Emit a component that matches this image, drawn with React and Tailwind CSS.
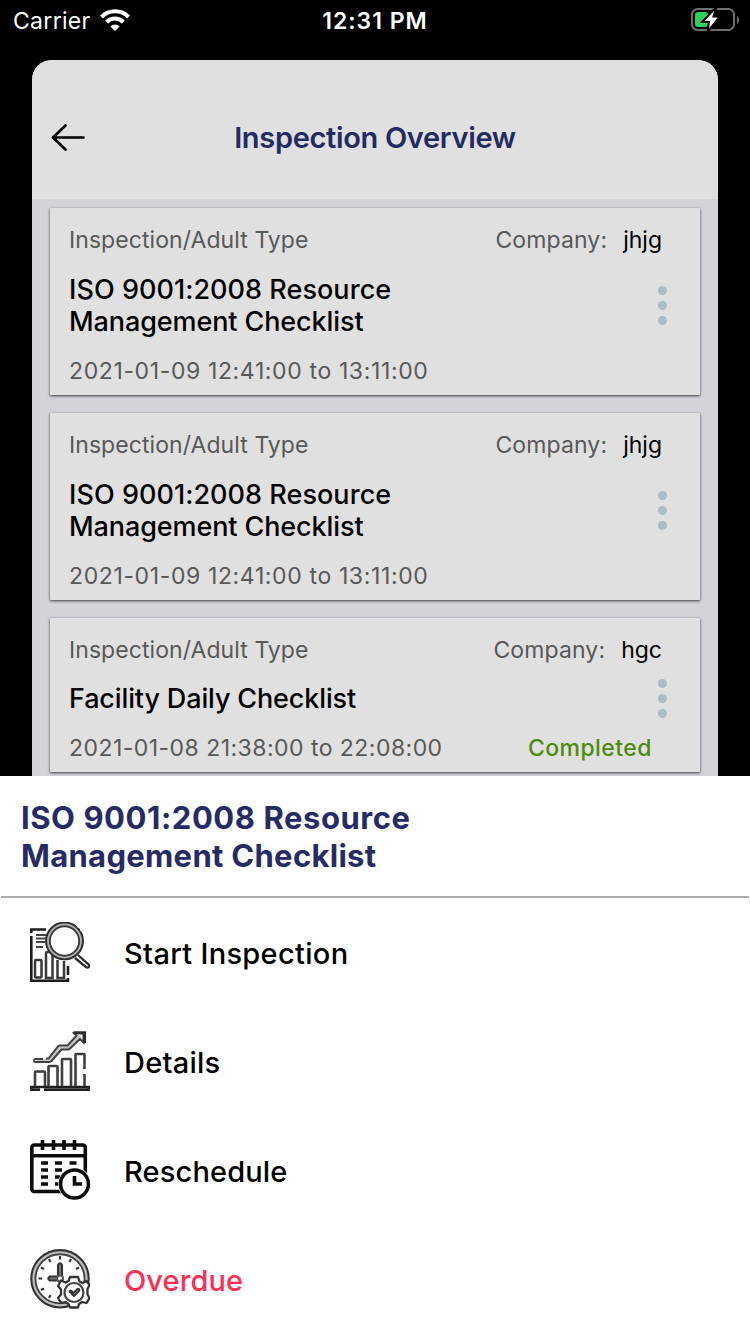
const cards = [
  {
    title: [
      { text: "ISO 9001:2008 Resource", spacing: "tracking-[0.05px]" },
      { text: "Management Checklist", spacing: "tracking-[-0.1px]" },
    ],
    company: "jhjg",
    time: "2021-01-09 12:41:00 to 13:11:00",
    timeSpacing: "tracking-[0.62px]",
  },
  {
    title: [
      { text: "ISO 9001:2008 Resource", spacing: "tracking-[0.05px]" },
      { text: "Management Checklist", spacing: "tracking-[-0.1px]" },
    ],
    company: "jhjg",
    time: "2021-01-09 12:41:00 to 13:11:00",
    timeSpacing: "tracking-[0.62px]",
  },
  {
    title: [{ text: "Facility Daily Checklist", spacing: "tracking-[-0.14px]" }],
    company: "hgc",
    time: "2021-01-08 21:38:00 to 22:08:00",
    timeSpacing: "tracking-[0.46px]",
    status: "Completed",
  },
];

function WifiIcon() {
  return (
    <svg className="ml-[9px] h-[22px] w-[30px]" viewBox="0 0 30 22" fill="none" stroke="#fff" strokeWidth="4.200">
      <path d="M1.500 7.900a19 19 0 0 1 27 0" />
      <path d="M6.600 13a11.800 11.800 0 0 1 16.800 0" />
      <path d="M15 22l-4.600-4.600a6.600 6.600 0 0 1 9.200 0z" fill="#fff" stroke="none" />
    </svg>
  );
}

function BatteryIcon() {
  return (
    <svg className="h-6 w-[50px]" viewBox="690 8 50 24">
      <rect x="692" y="9" width="42" height="21" rx="5.500" fill="none" stroke="#6f6f71" strokeWidth="2" />
      <path d="M737 16v8c2.600-1.600 2.600-6.400 0-8z" fill="#6f6f71" />
      <rect x="695" y="12" width="13" height="15" rx="3" fill="#30d158" />
      <path d="M716.500 7l-14.500 15h7L707.500 32l12.500-15.500h-6.500z" fill="#fff" stroke="#000" strokeWidth="2" />
    </svg>
  );
}

function BackArrow() {
  return (
    <svg className="h-7 w-9" viewBox="0 0 36 28" fill="none" stroke="#000" strokeWidth="2.700" strokeLinecap="round" strokeLinejoin="round">
      <path d="M33.500 13.500H3M15.500 1.500L3 13.500L15.500 25.500" />
    </svg>
  );
}

function Dots({ className }) {
  return (
    <div className={"flex w-[9px] flex-col gap-1.5 " + className}>
      <span className="size-[9px] rounded-full bg-[#adbbc4]" />
      <span className="size-[9px] rounded-full bg-[#adbbc4]" />
      <span className="size-[9px] rounded-full bg-[#adbbc4]" />
    </div>
  );
}

function Card({ card }) {
  const tall = card.title.length > 1;
  return (
    <article
      className={
        "flex flex-col rounded-[1px] bg-[#e0e0e0] pl-[19px] pr-[33px] pt-[16px] shadow-[0_1px_3px_rgba(0,0,0,0.75)] " +
        (tall ? "h-[187px]" : "h-[154px]")
      }
    >
      <div className="flex h-8 items-center justify-between pr-[5px] text-[23px] leading-8">
        <span className="tracking-[0.07px] text-[#585858]">Inspection/Adult Type</span>
        <span className="flex gap-4">
          <span className="tracking-[0.12px] text-[#585858]">Company:</span>
          <span className="text-black">{card.company}</span>
        </span>
      </div>
      <div className={"flex items-center justify-between " + (tall ? "mt-[18px] h-16" : "mt-[17px] h-8")}>
        <h2 className="text-[27px] font-medium leading-8 text-black">
          {card.title.map((line) => (
            <span key={line.text} className={"block " + line.spacing}>{line.text}</span>
          ))}
        </h2>
        <Dots className={tall ? "-mt-[2px]" : "-mt-px"} />
      </div>
      <div className="mt-[17px] flex h-8 items-center justify-between pr-[15px] text-[23px] leading-8">
        <span className={"text-[#585858] " + card.timeSpacing}>{card.time}</span>
        {card.status && <span className="font-medium tracking-[0.45px] text-[#4f8a10]">{card.status}</span>}
      </div>
    </article>
  );
}

function StartIcon() {
  return (
    <svg className="size-[60px]" viewBox="0 0 60 60" fill="none" stroke="#3a3a3a" strokeWidth="2.500">
      <path d="M16 7.500H1.300V11M1.300 14V58.700H38V56M38 53V44" stroke="#1c1c1c" strokeWidth="2.600" />
      <path d="M6 13h11M6 16.500h10M6 20h10M6 25h7" stroke="#444" strokeWidth="2" />
      <rect x="5" y="38" width="6.500" height="17.500" rx="1" />
      <path d="M16 56V31q0-1 1-1h4.500q1 0 1 1V56zM27.500 38v18h6.500V39" />
      <path d="M48 33l10.500 9.500q1.500 2-.5 3-1 .5-2-.5L45 36" stroke="#2c2c2c" strokeWidth="2.300" />
      <circle cx="34.500" cy="19" r="16.700" stroke="#b5b5b5" strokeWidth="5" />
      <circle cx="34.500" cy="19" r="18.400" stroke="#2b2b2b" strokeWidth="1.900" />
      <circle cx="34.500" cy="19" r="14.700" stroke="#3c3c3c" strokeWidth="1.900" />
      <path d="M47.500 5.500l2-2M50.500 9l2.500-1.500" stroke="#fff" strokeWidth="1.500" />
    </svg>
  );
}

function DetailsIcon() {
  return (
    <svg className="size-[60px]" viewBox="0 0 60 60" fill="none" stroke="#404040" strokeWidth="2.600">
      <path d="M14 58.700H58.700V56H1.300V58.700H10" stroke="#1f1f1f" strokeWidth="2.400" />
      <path d="M5 55V41.500q0-1 1-1h8q1 0 1 1v13.500M18.500 55V36q0-1 1-1h7q1 0 1 1v19M32 55V29q0-1 1-1h7q1 0 1 1v26M45.500 55V24q0-1 1-1h7q1 0 1 1v14M54.500 43v12" />
      <path d="M7 29.500H19.500L30 17H38L50 5" stroke="#c4c4c4" strokeWidth="3.500" />
      <path d="M13 28H5.500q-1.500 0-1.500 1.500T5.500 31H19q1 0 2.500-1L31.500 18.500H38q1 0 2-1L50 8l3.500 3.500V2.200H44l2.500 2.500L37.500 14.500H30q-1 0-2 1L18.500 27.500H16" strokeWidth="2" />
      <path d="M43.500 1.800H54.500V12" stroke="#2d2d2d" strokeWidth="3" />
    </svg>
  );
}

function RescheduleIcon() {
  return (
    <svg className="size-[60px]" viewBox="0 0 60 60" fill="none" stroke="#0b0b0b" strokeWidth="3.600">
      <rect x="1.800" y="5" width="53.500" height="46.500" rx="2.500" />
      <path d="M2 15.800H55M12.500 0v10M23.500 0v10M34 0v10M44.500 0v10" />
      <path d="M11 23h7M25 23h7M39.500 23h7M11 30h7M25 30h7M11 37h7M25 37h7M11 44h7M25 44h7" strokeWidth="3.600" />
      <circle cx="44.500" cy="44" r="16.500" fill="#fff" stroke="none" />
      <circle cx="44.500" cy="44" r="14" fill="#fff" />
      <path d="M44.500 36v8h7.500" />
    </svg>
  );
}

function OverdueIcon() {
  return (
    <svg className="size-[60px]" viewBox="0 0 60 60" fill="none" stroke="#333" strokeWidth="2.100">
      <circle cx="30" cy="29.800" r="26.800" stroke="#c0c0c0" strokeWidth="4" />
      <circle cx="30" cy="29.800" r="28.700" />
      <circle cx="30" cy="29.800" r="24.600" stroke="#444" strokeWidth="1.900" />
      <path d="M30 7v3.500M19 10l1.500 3M11 18.500l3 1.500M8.500 29.500h3.500M11 41l3-1.500M19 49l1.500-3M41 10l-1.500 3M49 18.500l-3 1.500" strokeWidth="2.200" />
      <path d="M28 27V16q2-3.500 4 0V27M27 27.500H20q-3.500 2 0 4h7" fill="#777" />
      <circle cx="30" cy="29.500" r="3" fill="#fff" stroke="#555" />
      <path
        d="M40 28h8l1.500 4.500 3 1.500 4-2 3 4-2 4v5.500l2 3.500-3 5-4.500-1-3 2-1 3.500h-8l-1.500-3.500-3-2-4.500 1-3-5 3-3.500v-5l-3-3.500 3-5.500 4.500 2 3-1.500z"
        fill="#fff"
        strokeLinejoin="round"
        strokeWidth="2.300"
      />
      <circle cx="44" cy="43.500" r="9.500" stroke="#444" strokeWidth="2.200" />
      <path d="M39.500 42.500q1-1.500 2.500 0l1.500 1.300L47.500 40q3-.5 1.500 2L44 47z" fill="#999" strokeLinejoin="round" strokeWidth="1.800" />
    </svg>
  );
}

const actions = [
  { label: "Start Inspection", Icon: StartIcon, color: "text-black tracking-[0.32px]" },
  { label: "Details", Icon: DetailsIcon, color: "text-black tracking-[0.25px]" },
  { label: "Reschedule", Icon: RescheduleIcon, color: "text-black tracking-[0.15px]" },
  { label: "Overdue", Icon: OverdueIcon, color: "text-[#ff2d55] tracking-[0.1px]" },
];

export default function App() {
  return (
    <main className="flex h-[1334px] w-[750px] flex-col overflow-hidden bg-black font-['Inter','Liberation_Sans',sans-serif]">
      <div className="grid h-[60px] shrink-0 grid-cols-3 items-start pt-[5px] text-white">
        <div className="flex h-8 items-center pl-[13px]">
          <span className="text-[23px] leading-8 tracking-[0.3px]">Carrier</span>
          <span className="-mt-[2px]">
            <WifiIcon />
          </span>
        </div>
        <div className="text-center text-[23px] font-semibold leading-8 tracking-[1px]">12:31 PM</div>
        <div className="-mt-px flex h-8 items-center justify-end pr-[10px]">
          <BatteryIcon />
        </div>
      </div>

      <section className="mx-8 flex h-[716px] shrink-0 flex-col overflow-hidden rounded-t-[20px] bg-[#d4d3d9]">
        <header className="grid h-[139px] shrink-0 grid-cols-[60px_1fr_60px] items-center bg-[#e0e0e0] pt-[17px]">
          <div className="pl-[18px]">
            <BackArrow />
          </div>
          <h1 className="text-center text-[29px] font-semibold leading-9 tracking-[-0.33px] text-[#242a62]">Inspection Overview</h1>
        </header>
        <div className="flex flex-col gap-[18px] px-[18px] pt-[9px]">
          {cards.map((card, i) => (
            <Card key={i} card={card} />
          ))}
        </div>
      </section>

      <section className="flex h-[558px] shrink-0 flex-col bg-white">
        <h2 className="pl-[21px] pt-[23px] text-[31px] font-bold leading-[38px] text-[#262b66]">
          <span className="block tracking-[0.55px]">ISO 9001:2008 Resource</span>
          <span className="block tracking-[0.3px]">Management Checklist</span>
        </h2>
        <div className="mx-[1px] mt-[21px] h-[2px] bg-[#aaaaaa]" />
        <ul className="-mt-px flex flex-col">
          {actions.map(({ label, Icon, color }) => (
            <li key={label} className="flex h-[109px] items-center pl-[30px]">
              <Icon />
              <span className={"ml-[34px] mt-[5px] text-[29px] font-medium leading-9 " + color}>{label}</span>
            </li>
          ))}
        </ul>
      </section>
    </main>
  );
}
